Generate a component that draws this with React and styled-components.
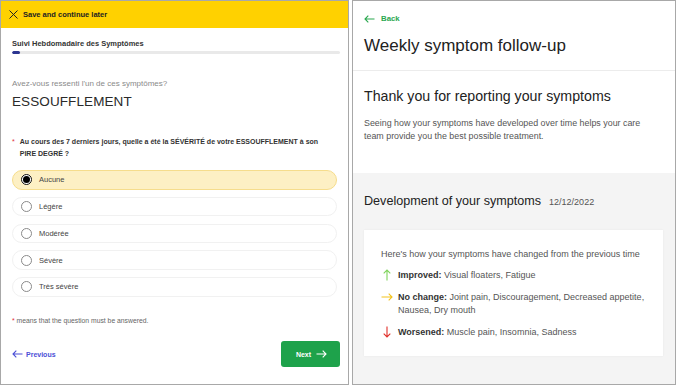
import React from 'react';
import styled, { createGlobalStyle } from 'styled-components';

const Global = createGlobalStyle`
  html, body { margin: 0; padding: 0; background: #fff; }
  body { font-family: "Liberation Sans", Arial, sans-serif; color: #222; }
  * { box-sizing: border-box; }
`;

const Page = styled.div`
  display: flex;
  gap: 3px;
  width: 676px;
  height: 386px;
`;

const LeftPanel = styled.section`
  width: 349px;
  height: 385px;
  border: 1px solid #a8a8a8;
  display: flex;
  flex-direction: column;
  background: #fff;
`;

const SaveBar = styled.div`
  height: 27px;
  flex: none;
  background: #ffd100;
  display: flex;
  align-items: center;
  gap: 5px;
  padding-left: 8px;
  font-size: 7.5px;
  font-weight: 700;
  color: #222;
`;

const FormBody = styled.div`
  padding: 0 8px 0 11px;
  display: flex;
  flex-direction: column;
`;

const SurveyName = styled.div`
  margin-top: 11px;
  font-size: 7.5px;
  line-height: 10px;
  font-weight: 700;
  color: #333;
`;

const Track = styled.div`
  margin-top: 2px;
  height: 3px;
  border-radius: 2px;
  background: #e9e9e9;
  overflow: hidden;
`;

const Fill = styled.div`
  height: 100%;
  border-radius: 2px;
  background: #2c3591;
`;

const Prompt = styled.div`
  margin-top: 25px;
  font-size: 8px;
  line-height: 10px;
  color: #8a8a8a;
`;

const Symptom = styled.h1`
  margin: 3.5px 0 0;
  font-size: 13.5px;
  line-height: 18px;
  font-weight: 400;
  color: #2a2a2a;
  letter-spacing: 0.1px;
`;

const Question = styled.div`
  margin-top: 25px;
  display: flex;
  gap: 5px;
  font-size: 7px;
  line-height: 12.3px;
  font-weight: 700;
  color: #333;
  padding-right: 6px;
`;

const Star = styled.span`
  color: #e0303a;
  font-weight: 400;
`;

const Options = styled.div`
  margin-top: 10px;
  margin-right: 3px;
  display: flex;
  flex-direction: column;
  gap: 7.25px;
`;

const Option = styled.div`
  height: 19.5px;
  border-radius: 10px;
  display: flex;
  align-items: center;
  gap: 7px;
  padding-left: 8px;
  font-size: 7.5px;
  color: #444;
  background: ${(p) => (p.$selected ? '#fdf0c4' : '#fff')};
  border: 1px solid ${(p) => (p.$selected ? '#f6dd8c' : '#f1f1f1')};
`;

const Radio = styled.span`
  width: 11px;
  height: 11px;
  border-radius: 50%;
  flex: none;
  border: 1px solid ${(p) => (p.$checked ? '#111' : '#8a8a8a')};
  background: #fff;
  display: flex;
  align-items: center;
  justify-content: center;
  &::after {
    content: '';
    width: 7px;
    height: 7px;
    border-radius: 50%;
    background: ${(p) => (p.$checked ? '#000' : 'transparent')};
  }
`;

const Required = styled.div`
  margin-top: 19.5px;
  font-size: 6.8px;
  line-height: 10px;
  color: #666;
`;

const Footer = styled.div`
  margin-top: 15px;
  height: 26px;
  display: flex;
  align-items: center;
  justify-content: space-between;
`;

const PrevLink = styled.a`
  display: flex;
  align-items: center;
  gap: 3px;
  font-size: 7px;
  font-weight: 700;
  color: #4b4fd6;
  text-decoration: none;
`;

const NextButton = styled.button`
  width: 59px;
  height: 26px;
  border: none;
  border-radius: 3px;
  background: #1ea24b;
  color: #fff;
  font-family: inherit;
  font-size: 7px;
  font-weight: 700;
  display: flex;
  align-items: center;
  justify-content: center;
  gap: 5px;
  padding: 0 0 0 2px;
`;

const RightPanel = styled.section`
  width: 324px;
  height: 385px;
  border: 1px solid #a8a8a8;
  display: flex;
  flex-direction: column;
  background: #f4f4f4;
`;

const TopArea = styled.div`
  background: #fff;
  padding: 13px 11px 14.5px;
  border-bottom: 1px solid #ececec;
`;

const BackLink = styled.a`
  display: flex;
  align-items: center;
  gap: 6px;
  font-size: 7.8px;
  line-height: 10px;
  font-weight: 700;
  color: #2aa84f;
  text-decoration: none;
`;

const Title = styled.h1`
  margin: 11.5px 0 0;
  font-size: 17px;
  line-height: 20px;
  font-weight: 400;
  color: #222;
`;

const ThanksArea = styled.div`
  background: #fff;
  padding: 17px 11px 30px;
`;

const Subtitle = styled.h2`
  margin: 0;
  font-size: 14.2px;
  line-height: 16px;
  font-weight: 400;
  color: #222;
`;

const Paragraph = styled.p`
  margin: 12.8px 0 0;
  max-width: 288px;
  font-size: 8.9px;
  line-height: 13px;
  color: #555;
`;

const Development = styled.div`
  flex: 1;
  padding: 20px 12px 0 11px;
`;

const DevTitle = styled.h2`
  margin: 0;
  display: flex;
  align-items: baseline;
  gap: 8px;
  font-size: 12.6px;
  line-height: 16px;
  font-weight: 400;
  color: #222;
`;

const DateText = styled.span`
  font-size: 9px;
  color: #555;
`;

const Card = styled.div`
  margin-top: 20px;
  background: #fff;
  padding: 18.5px 12px 17px 17px;
  box-shadow: 0 0 2px rgba(0, 0, 0, 0.06);
`;

const CardIntro = styled.div`
  font-size: 9px;
  line-height: 12px;
  color: #555;
`;

const ChangeList = styled.div`
  margin-top: 8.5px;
  display: flex;
  flex-direction: column;
  gap: 9px;
`;

const ChangeRow = styled.div`
  display: grid;
  grid-template-columns: 17px 1fr;
  font-size: 9px;
  line-height: 13px;
  color: #555;
`;

const IconCell = styled.span`
  height: 13px;
  display: flex;
  align-items: center;
  justify-content: ${(p) => (p.$left ? 'flex-start' : 'center')};
  padding-right: ${(p) => (p.$left ? '0' : '6px')};
`;

const ChangeText = styled.p`
  margin: 0;
`;

const Label = styled.b`
  font-weight: 700;
  color: #333;
  margin-right: 2.5px;
`;

const XIcon = () => (
  <svg width="9" height="9" viewBox="0 0 9 9">
    <path d="M0.5 0.5L8.5 8.5M8.5 0.5L0.5 8.5" stroke="#222" strokeWidth="1" fill="none" />
  </svg>
);

const LeftArrow = ({ color, w = 11 }) => (
  <svg width={w} height="8" viewBox={`0 0 ${w} 8`}>
    <path d={`M${w - 0.5} 4H1M4.3 0.7L1 4l3.3 3.3`} stroke={color} strokeWidth="1.1" fill="none" />
  </svg>
);

const RightArrow = ({ color, w = 11 }) => (
  <svg width={w} height="8" viewBox={`0 0 ${w} 8`}>
    <path d={`M0.5 4H${w - 1}M${w - 4.3} 0.7L${w - 1} 4l-3.3 3.3`} stroke={color} strokeWidth="1.1" fill="none" />
  </svg>
);

const UpArrow = ({ color }) => (
  <svg width="8" height="12" viewBox="0 0 8 12">
    <path d="M4 11.5V1M0.7 4.3L4 1l3.3 3.3" stroke={color} strokeWidth="1.1" fill="none" />
  </svg>
);

const DownArrow = ({ color }) => (
  <svg width="8" height="12" viewBox="0 0 8 12">
    <path d="M4 0.5V11M0.7 7.7L4 11l3.3-3.3" stroke={color} strokeWidth="1.1" fill="none" />
  </svg>
);

const options = ['Aucune', 'Légère', 'Modérée', 'Sévère', 'Très sévère'];

const changes = [
  { label: 'Improved:', text: 'Visual floaters, Fatigue', icon: <UpArrow color="#7fd35c" /> },
  {
    label: 'No change:',
    text: 'Joint pain, Discouragement, Decreased appetite, Nausea, Dry mouth',
    icon: <RightArrow color="#f3c31c" w={12} />,
    left: true,
  },
  { label: 'Worsened:', text: 'Muscle pain, Insomnia, Sadness', icon: <DownArrow color="#e0302a" /> },
];

export default function App() {
  return (
    <>
      <Global />
      <Page>
        <LeftPanel>
          <SaveBar>
            <XIcon />
            Save and continue later
          </SaveBar>
          <FormBody>
            <SurveyName>Suivi Hebdomadaire des Symptômes</SurveyName>
            <Track>
              <Fill style={{ width: '8px' }} />
            </Track>
            <Prompt>Avez-vous ressenti l'un de ces symptômes?</Prompt>
            <Symptom>ESSOUFFLEMENT</Symptom>
            <Question>
              <Star>*</Star>
              <span>
                Au cours des 7 derniers jours, quelle a été la SÉVÉRITÉ de votre ESSOUFFLEMENT à son PIRE DEGRÉ ?
              </span>
            </Question>
            <Options>
              {options.map((o, i) => (
                <Option key={o} $selected={i === 0}>
                  <Radio $checked={i === 0} />
                  {o}
                </Option>
              ))}
            </Options>
            <Required>
              <Star>*</Star> means that the question must be answered.
            </Required>
            <Footer>
              <PrevLink href="#">
                <LeftArrow color="#4b4fd6" />
                Previous
              </PrevLink>
              <NextButton>
                Next
                <RightArrow color="#fff" />
              </NextButton>
            </Footer>
          </FormBody>
        </LeftPanel>
        <RightPanel>
          <TopArea>
            <BackLink href="#">
              <LeftArrow color="#2aa84f" />
              Back
            </BackLink>
            <Title>Weekly symptom follow-up</Title>
          </TopArea>
          <ThanksArea>
            <Subtitle>Thank you for reporting your symptoms</Subtitle>
            <Paragraph>
              Seeing how your symptoms have developed over time helps your care team provide you the best possible
              treatment.
            </Paragraph>
          </ThanksArea>
          <Development>
            <DevTitle>
              Development of your symptoms <DateText>12/12/2022</DateText>
            </DevTitle>
            <Card>
              <CardIntro>Here's how your symptoms have changed from the previous time</CardIntro>
              <ChangeList>
                {changes.map((c) => (
                  <ChangeRow key={c.label}>
                    <IconCell $left={c.left}>{c.icon}</IconCell>
                    <ChangeText>
                      <Label>{c.label}</Label>
                      {c.text}
                    </ChangeText>
                  </ChangeRow>
                ))}
              </ChangeList>
            </Card>
          </Development>
        </RightPanel>
      </Page>
    </>
  );
}
